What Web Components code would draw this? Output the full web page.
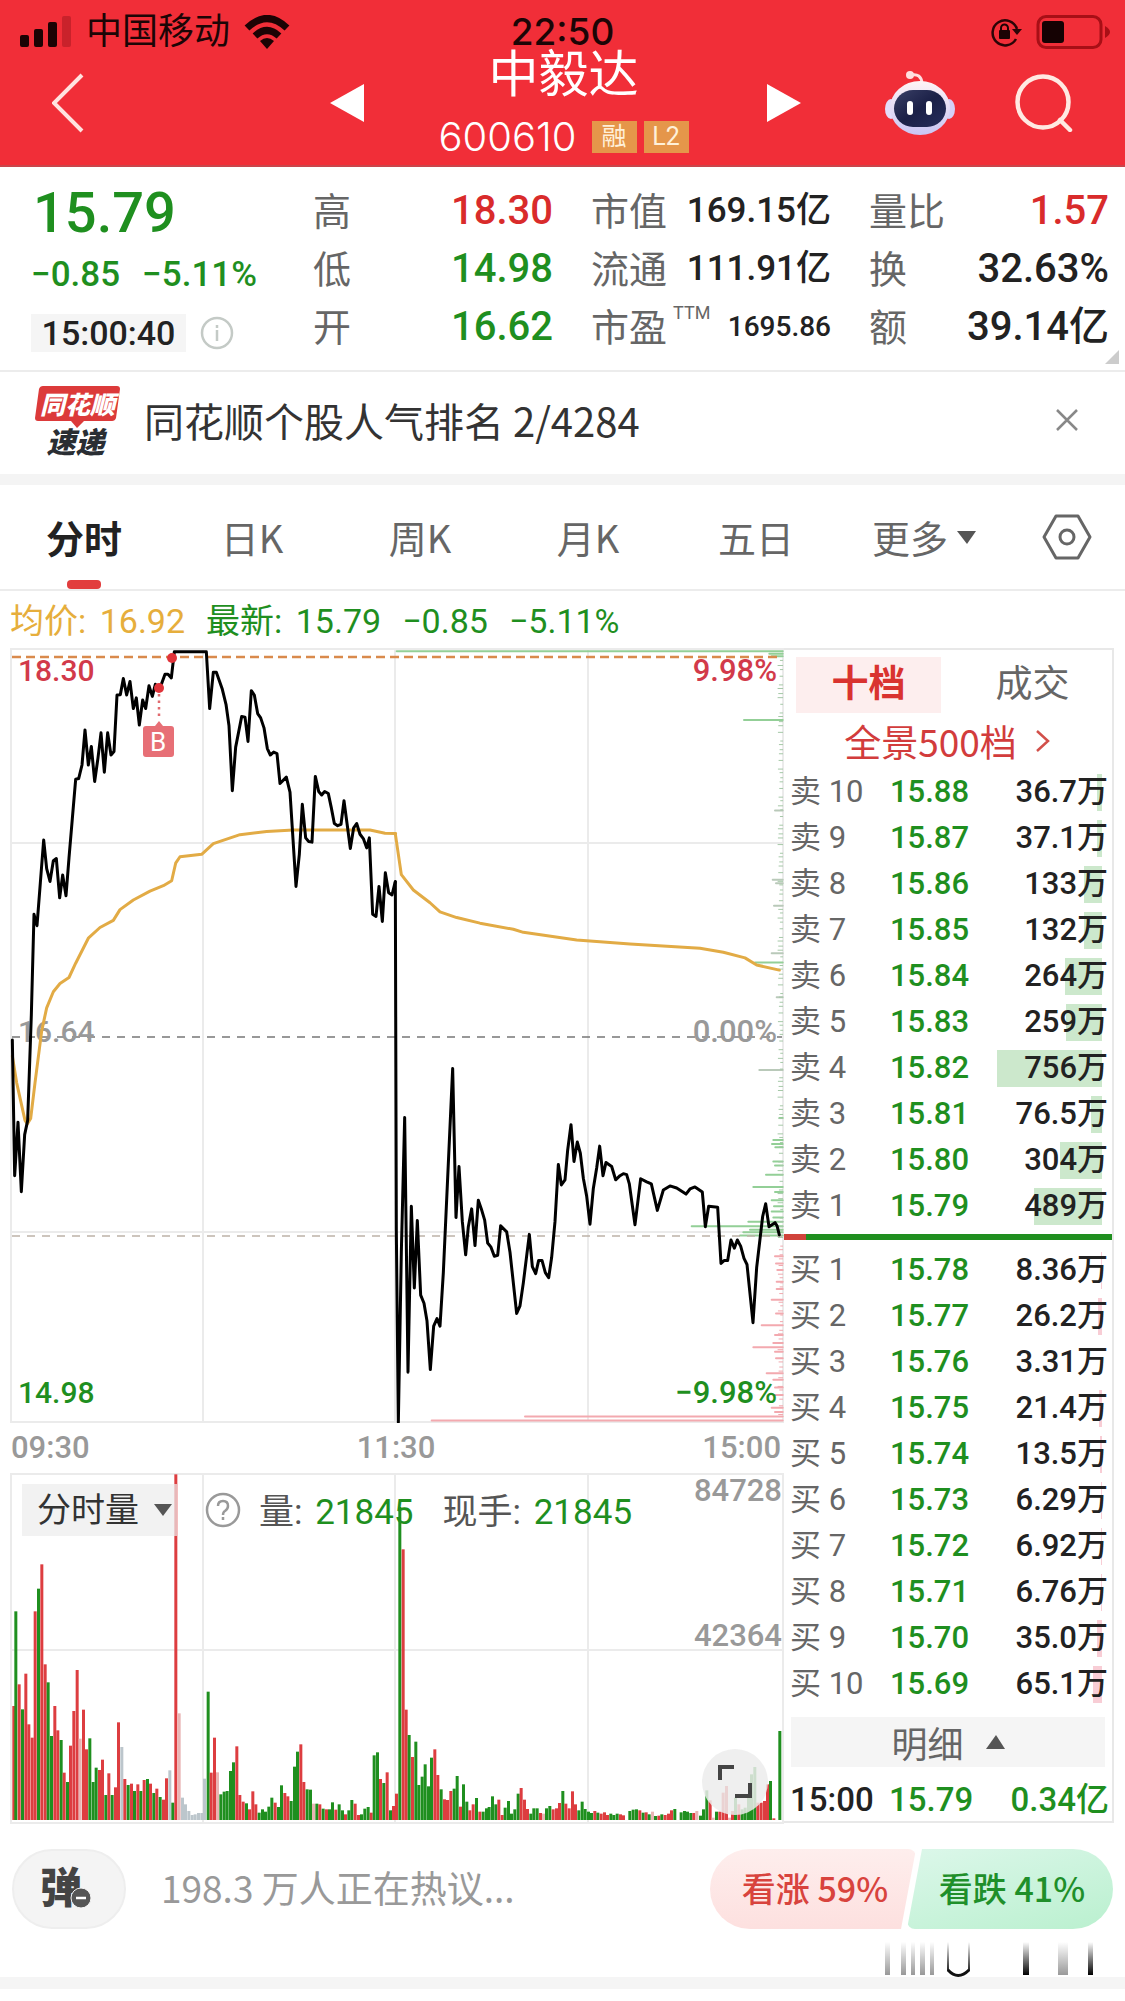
<!DOCTYPE html>
<html lang="zh-CN">
<head>
<meta charset="utf-8">
<meta name="viewport" content="width=device-width">
<title>中毅达 600610</title>
<style>
body{margin:0;background:#fff;color:#222;font-family:Roboto,"Noto Sans CJK SC",sans-serif}
</style>
</head>
<body>
<stock-page></stock-page>
<script>
const BASE=`*{box-sizing:border-box}button,select,input{font:inherit;color:inherit;background:none;border:0;padding:0;margin:0;border-radius:0}svg{display:block}.up{color:#d92b2b}.down{color:#1f8f1f}`;
function define(name,css,html,setup){
  customElements.define(name,class extends HTMLElement{
    constructor(){
      super();
      this.attachShadow({mode:'open'}).innerHTML=`<style>${BASE}${css}</style>${typeof html==='function'?html(this):html}`;
      if(setup)setup(this.shadowRoot,this);
    }
  });
}

/* ---------- phone status bar ---------- */
define('status-bar',`
:host{display:grid;grid-template-columns:1fr auto 1fr;align-items:center;height:48px;padding:14px 20px 0;color:#1c0506;font-size:36px;line-height:36px}
.l,.r{display:flex;align-items:center}.l{gap:14px}.r{justify-content:flex-end;gap:14px;margin-right:-5px}
time{font-family:Inter,sans-serif;font-weight:500;font-size:37px;line-height:34px}`,`
<div class="l">
<svg width="52" height="32" viewBox="0 0 52 32"><g fill="#1c0304"><rect y="19" width="9" height="12" rx="2"/><rect x="14" y="13" width="9" height="18" rx="2"/><rect x="28" y="6" width="9" height="25" rx="2"/></g><rect x="42" width="9" height="31" rx="2" fill="#c9222b"/></svg>
<span>中国移动</span>
<svg width="46" height="34" viewBox="0 0 46 34"><g fill="none" stroke="#1c0304" stroke-width="7"><path d="M3 13Q23-6 43 13"/><path d="M11 21Q23 10 35 21"/></g><path d="M16 26q7-6 14 0l-7 8z" fill="#1c0304"/></svg>
</div>
<time>22:50</time>
<div class="r">
<svg width="32" height="30" viewBox="0 0 32 30"><path d="M26 22A12.500 12.500 0 1 1 27 12" fill="none" stroke="#2a0507" stroke-width="2.500"/><path d="M22 12h10l-5 6z" fill="#2a0507"/><rect x="9" y="13" width="11" height="9" rx="1" fill="#1c0304"/><path d="M11 14v-3a3.500 3.500 0 0 1 7 0v3" fill="none" stroke="#1c0304" stroke-width="2"/></svg>
<svg width="74" height="34" viewBox="0 0 74 34"><rect x="2" y="1.500" width="63" height="31" rx="8" fill="none" stroke="#a80f16" stroke-width="3"/><rect x="6" y="6" width="22" height="22" rx="3" fill="#150203"/><path d="M69 11q5 3 5 6t-5 6z" fill="#a80f16"/></svg>
</div>`);

/* ---------- title bar ---------- */
define('stock-header',`
:host{display:grid;grid-template-columns:364fr 403fr 358fr;height:119px;color:#fff;border-bottom:2px solid #c9454b}
.side{display:flex;align-items:center;padding-bottom:8px}
.l{justify-content:space-between;padding-left:52px}
.r{padding-right:52px}.r button:nth-child(2){margin-left:auto;margin-right:60px}
.mid{text-align:center;padding:2px 4px 0 0}
h1{margin:0 0 17px;font-weight:400;font-size:50px;line-height:50px}
.code{display:flex;justify-content:center;align-items:center;gap:7px;font-size:40px;line-height:40px}
.code b{font-family:Inter,sans-serif;font-weight:300;margin-right:8px}
.tag{width:45px;height:32px;line-height:32px;font-size:25px;background:#e5964a;color:#fff0d8}`,`
<div class="side l">
<button aria-label="返回"><svg width="32" height="60" viewBox="0 0 32 60"><path d="M30 2L2 30l28 28" fill="none" stroke="#ffe3df" stroke-width="4"/></svg></button>
<button aria-label="上一只"><svg width="34" height="38" viewBox="0 0 34 38"><path d="M34 0v38L0 19z" fill="#fff"/></svg></button>
</div>
<div class="mid"><h1>中毅达</h1><div class="code"><b>600610</b><span class="tag">融</span><span class="tag">L2</span></div></div>
<div class="side r">
<button aria-label="下一只"><svg width="34" height="38" viewBox="0 0 34 38"><path d="M0 0v38l34-19z" fill="#fff"/></svg></button>
<button aria-label="智能助手"><svg width="70" height="64" viewBox="0 0 70 64">
<defs><linearGradient id="h" x2="0" y2="1"><stop stop-color="#fff4f6"/><stop offset="1" stop-color="#c9c5f4"/></linearGradient><linearGradient id="f" x2="1" y2="1"><stop stop-color="#3a4066"/><stop offset=".5" stop-color="#1b2047"/><stop offset="1" stop-color="#262d5c"/></linearGradient></defs>
<path d="M26 4q10-2 11 8" fill="none" stroke="#ffdfe0" stroke-width="3"/><circle cx="25" cy="4" r="4" fill="#ffdfe0"/>
<ellipse cx="6" cy="38" rx="6" ry="10" fill="#e3dcfa"/><ellipse cx="64" cy="38" rx="6" ry="10" fill="#d5d0f8"/>
<ellipse cx="35" cy="37" rx="30" ry="27" fill="url(#h)"/><rect x="9" y="19" width="52" height="37" rx="19" fill="url(#f)"/>
<rect x="22" y="30" width="6" height="14" rx="3" fill="#fff"/><rect x="41" y="30" width="6" height="14" rx="3" fill="#fff"/></svg></button>
<button aria-label="搜索"><svg width="58" height="58" viewBox="0 0 58 58"><circle cx="28" cy="28" r="25.500" fill="none" stroke="#ffe9e2" stroke-width="4.500"/><path d="M45 46l10 10" stroke="#ffe9e2" stroke-width="4.500" stroke-linecap="round"/></svg></button>
</div>`);

/* ---------- quote summary ---------- */
define('quote-panel',`
:host{display:grid;grid-template-columns:244fr 240fr 240fr 240fr;column-gap:38px;padding:15px 16px 14px 31px;height:205px;border-bottom:2px solid #ececec;position:relative}
dl{display:grid;grid-template-rows:58px 58px 58px;margin:0}
dl div{display:flex;justify-content:space-between;align-items:center}
dt{font-size:38px;line-height:44px;color:#666;white-space:nowrap;padding-top:2px}dd{margin:0;font-weight:500;font-size:40px;line-height:44px;white-space:nowrap}
dl.cap dd{font-size:35px}dl.cap div:last-child dd{font-size:28px}
sup{font-size:18px;line-height:18px;position:relative;top:-8px;margin-left:6px}
.main{display:flex;flex-direction:column;align-items:flex-start;white-space:nowrap}
.main>b{font-weight:500;font-size:56px;line-height:62px;padding-left:2px}
.chg{display:flex;gap:22px;font-size:35px;line-height:40px;font-weight:500;margin:11px 0 19px}
.t{display:flex;align-items:center;gap:14px}.t time{background:#f5f5f5;width:155px;text-align:center;font-weight:500;font-size:34px;line-height:38px}
i{position:absolute;right:6px;bottom:6px;border:solid transparent;border-width:14px 0 0 14px;border-right:0;width:0;height:0;border-bottom:14px solid #ccc;border-top:0}`,`
<div class="main"><b class="down">15.79</b><div class="chg down"><span>−0.85</span><span>−5.11%</span></div>
<div class="t"><time>15:00:40</time><svg width="34" height="34" viewBox="0 0 34 34" fill="none" stroke="#c4cac6" stroke-width="2.500"><circle cx="17" cy="17" r="15"/><path d="M17 14v11M17 9v3"/></svg></div></div>
<dl><div><dt>高</dt><dd class="up">18.30</dd></div><div><dt>低</dt><dd class="down">14.98</dd></div><div><dt>开</dt><dd class="down">16.62</dd></div></dl>
<dl class="cap"><div><dt>市值</dt><dd>169.15亿</dd></div><div><dt>流通</dt><dd>111.91亿</dd></div><div><dt>市盈<sup>TTM</sup></dt><dd>1695.86</dd></div></dl>
<dl><div><dt>量比</dt><dd class="up">1.57</dd></div><div><dt>换</dt><dd>32.63%</dd></div><div><dt>额</dt><dd>39.14亿</dd></div></dl><i></i>`);

/* ---------- news strip ---------- */
define('news-strip',`
:host{display:flex;align-items:center;height:113px;padding:0 47px 6px 35px;border-bottom:11px solid #f4f4f4}
a{flex:1;margin-left:24px;color:#333;text-decoration:none;font-family:"Noto Sans CJK SC",sans-serif;font-size:40px;line-height:48px}
.logo{width:85px;height:70px;font-weight:900;font-style:italic;text-align:center;margin-top:2px;position:relative;font-family:"Noto Sans CJK SC",sans-serif}
.logo svg{position:absolute;left:0;top:0}
.logo span{display:block;position:relative;color:#fff;font-size:25px;line-height:34px}.logo span+span{color:#2a2e33;font-size:29px;line-height:36px;margin-top:2px;margin-right:4px}`,`
<div class="logo"><svg width="85" height="42" viewBox="0 0 85 42"><path d="M8 0h74q3 0 3 3l-4 29q-1 3-4 3H49l-7 7-6-7H3q-3 0-3-3L4 3q1-3 4-3z" fill="#dc3a3a"/></svg><span>同花顺</span><span>速递</span></div>
<a href="#">同花顺个股人气排名 2/4284</a>
<button aria-label="关闭"><svg width="22" height="22" viewBox="0 0 22 22"><path d="M1 1l20 20M21 1L1 21" stroke="#888" stroke-width="2.500"/></svg></button>`);

/* ---------- period tabs ---------- */
define('period-tabs',`
:host{display:flex;height:106px;border-bottom:2px solid #ececec;font-family:"Noto Sans CJK SC",sans-serif}
button{flex:168 1 0;font-size:38px;line-height:104px;color:#666;position:relative;white-space:nowrap;display:flex;justify-content:center;align-items:center;gap:9px}
button:last-child{flex-grow:117}
.on{font-weight:700;color:#222}.on::after{content:"";position:absolute;width:34px;height:9px;border-radius:4px;background:#e23d3d;bottom:0}`,`
<button class="on">分时</button><button>日K</button><button>周K</button><button>月K</button><button>五日</button>
<button>更多<svg width="19" height="13" viewBox="0 0 19 13"><path d="M0 0h19L10 13z" fill="#555"/></svg></button>
<button aria-label="设置"><svg width="50" height="46" viewBox="0 0 50 46" fill="none" stroke="#666" stroke-width="3"><path d="M14 2h22l12 21-12 21H14L2 23z" stroke-linejoin="round"/><circle cx="25" cy="23" r="7"/></svg></button>`);

/* ---------- legend ---------- */
define('chart-legend',`
:host{display:flex;height:57px;align-items:center;padding:2px 10px 0;font-size:34px;line-height:40px;white-space:nowrap}
span{margin-right:21px}.avg{color:#e6ae3c}b{font-weight:400;margin-left:5px}`,`
<span class="avg">均价: <b>16.92</b></span><span class="down">最新: <b>15.79</b></span><span class="down">−0.85</span><span class="down">−5.11%</span>`);

/* ---------- intraday price chart ---------- */
const PRICE_AM='37,1120 44,1500 54,1350 64,1545 74,1385 83,1345 94,1050 102,768 111,800 121,680 131,560 140,640 150,676 160,618 169,612 179,722 188,658 198,716 207,610 217,500 227,390 236,388 246,350 255,252 265,350 274,298 284,396 294,330 303,260 313,370 323,260 333,322 342,312 351,154 361,153 370,108 380,154 390,116 400,192 409,162 418,238 428,168 437,192 447,128 457,158 466,124 476,132 485,122 495,96 504,96 514,106 523,33 619,33 629,192 640,90 649,90 667,138 678,180 687,240 697,422 707,300 725,214 735,216 744,284 754,142 763,154 773,206 782,218 792,246 802,304 811,322 821,314 831,318 840,402 859,384 870,426 888,690 898,600 907,460 917,554 926,564 936,566 946,382 956,424 965,434 974,424 985,430 994,470 1003,514 1013,520 1023,516 1032,450 1042,520 1051,584 1061,526 1070,514 1080,544 1090,556 1100,582 1108,554 1118,768 1128,774 1137,690 1147,788 1156,652 1166,708 1176,714 1186,676';
const PRICE_PM='46,475 49,1160 55,1533 64,1200 74,936 84,1435 94,1110 103,1270 112,1138 122,1284 132,1300 141,1335 151,1430 161,1345 171,1330 180,1345 190,1240 218,840 228,1132 237,1032 247,1140 257,1205 265,1150 275,1115 285,1187 295,1098 304,1115 314,1137 323,1182 333,1190 343,1208 353,1206 362,1148 380,1160 390,1200 410,1320 420,1305 430,1260 448,1165 457,1228 467,1242 476,1216 486,1216 496,1240 506,1250 515,1210 525,1140 535,1028 544,1068 555,1058 563,1000 573,950 582,1022 592,984 601,1006 610,1055 620,1090 630,1145 640,1075 650,1035 659,992 669,1050 678,1024 695,1032 707,1058 720,1050 730,1046 740,1048 748,1066 765,1146 782,1056 800,1062 814,1066 832,1118 850,1078 870,1070 890,1074 918,1086 930,1076 945,1072 967,1082 976,1150 986,1110 1013,1112 1023,1222 1033,1216 1043,1216 1053,1176 1063,1192 1072,1176 1082,1188 1092,1212 1101,1224 1119,1338 1130,1230 1148,1130 1157,1105 1167,1150 1185,1142 1191,1148 1198,1166';
const AVG_AM='37,1165 50,1240 75,1345 82,1355 92,1340 105,1240 125,1095 140,1030 160,985 180,962 207,945 227,905 265,835 300,805 340,785 360,755 400,728 450,703 490,688 515,674 527,625 540,607 605,600 640,570 720,545 800,536 880,532 1110,532 1155,541 1187,542';
const AVG_PM='46,380 64,460 100,490 150,515 180,533 230,544 300,555 400,567 430,573 590,588 750,596 960,604 1030,612 1095,623 1130,637 1198,647';
/* resting volume by price level: level, left end */
const DEPTH=[[22,50],[27,1168],[32,1175],[157,1092],[334,1185],[470,1178],[477,1188],[521,1182],[614,1175],[632,1125],[700,1190],[843,1138],[937,1198],[980,1180],[988,1176],[994,1186],[1022,1180],[1030,1185],[1048,1158],[1072,1120],[1082,1185],[1098,1175],[1110,1182],[1120,1175],[1132,1180],[1140,1105],[1149,935],[1156,1110],[1161,1090],[1167,1080],[1208,1185],[1222,1188],[1235,1192],[1258,1190],[1272,1190],[1293,1175],[1320,1188],[1343,1145],[1362,1185],[1378,1180],[1386,1120],[1395,1185],[1408,1188],[1437,1160],[1450,1180],[1465,1185],[1480,1180],[1505,1175],[1513,1185],[1522,435],[1530,155]];
const line=(x1,y1,x2,y2,a='')=>`<path d="M${x1} ${y1}L${x2} ${y2}" ${a}/>`;
define('price-chart',`
:host{display:block}svg{width:100%;height:auto}text{font-weight:500;font-size:30px}.e{text-anchor:end;font-size:31px}
.s{fill:none;stroke-linejoin:round;stroke-linecap:round;vector-effect:non-scaling-stroke}`,()=>{
let d='';
for(const [y,x] of DEPTH)d+=line(x,y,1208,y,`class="s" stroke-width="2" stroke="${y<1190?(y>300&&y<850&&x>1130?'#b9c9b9':'#93cf97'):'#f3a9af'}"`);
for(let y=40;y<1520;y+=7+(y*13%11))d+=line(1202-(y*7%9),y,1208,y,`class="s" stroke-width="1" stroke="${y<1180?'#a5c8a7':'#f0a8ae'}"`);
return `<svg viewBox="10 648 774 775" role="img" aria-label="分时走势">
<g fill="none" stroke="#ebebeb" stroke-width="2"><rect x="11" y="649" width="772" height="773"/>${line(203,648,203,1423)}${line(395,648,395,1423)}${line(588,648,588,1423)}${line(10,843,784,843)}${line(10,1232,784,1232)}</g>
<g transform="translate(380 640) scale(.33333 .5102)">${d}</g>
${line(12,657,782,657,'stroke="#d98a4c" stroke-width="2.500" stroke-dasharray="9 5"')}
${line(12,1037,782,1037,'stroke="#777" stroke-width="1.500" stroke-dasharray="8 7"')}
${line(12,1236,782,1236,'stroke="#bdb3a8" stroke-width="1.500" stroke-dasharray="8 7"')}
<g fill="#999"><text x="18" y="1042">16.64</text><text class="e" x="777" y="1042">0.00%</text></g>
<g transform="translate(0 640) scale(.33333 .35714)"><polyline class="s" points="${AVG_AM}" stroke="#e2ab45" stroke-width="3"/><polyline class="s" points="${PRICE_AM}" stroke="#000" stroke-width="3"/></g>
<g transform="translate(380 640) scale(.33333 .5102)"><polyline class="s" points="${AVG_PM}" stroke="#e2ab45" stroke-width="3"/><polyline class="s" points="${PRICE_PM}" stroke="#000" stroke-width="3"/></g>
<circle cx="172" cy="658" r="5" fill="#e0333a"/><circle cx="159" cy="688" r="5" fill="#e0333a"/>
${line(159,694,159,718,'stroke="#e06a6e" stroke-width="2.500" stroke-dasharray="2.500 4"')}
<path d="M146 726h9l4-5 4 5h8q3 0 3 3v25q0 3-3 3h-25q-3 0-3-3v-25q0-3 3-3z" fill="#e76f76"/><text x="158" y="751" text-anchor="middle" fill="#fff" style="font-size:26px;font-weight:400">B</text>
<g fill="#d23a4a"><text x="18" y="681">18.30</text><text class="e" x="777" y="681">9.98%</text></g>
<g fill="#1f8f1f"><text x="18" y="1403">14.98</text><text class="e" x="777" y="1403">−9.98%</text></g></svg>`;});

define('time-axis',`:host{display:flex;justify-content:space-between;height:50px;line-height:50px;font-size:31px;font-weight:500;color:#999;padding:0 3px 0 1px}`,`<span>09:30</span><span>11:30</span><span>15:00</span>`);

/* ---------- volume chart: x, top, colour (r rise, g fall, n flat, p pale rise) ---------- */
const VOL_AM='42 855r,48 571g,58 790r,68 865g,78 758r,87 910r,97 950r,106 571r,116 503g,126 430r,136 730r,145 784g,155 945g,165 855r,174 928r,184 957g,193 1055r,203 1083g,212 974r,222 870r,232 747r,241 953p,251 866r,260 985r,270 952g,280 1083g,289 1040g,299 1047r,308 1016r,318 1122g,327 1057r,337 1122g,347 1099r,356 904r,366 978n,375 1074r,385 1092g,395 1088r,404 1110g,414 1090r,423 1110g,433 1077r,443 1074g,452 1088r,462 1116g,471 1103r,481 1128g,491 1136r,500 1072r,510 1048n,519 1145g,528 160r,538 877p,548 1130n,557 1150n,567 1170n,577 1182n,586 1180n,596 1176n,606 1176n,614 1073n,625 812g,634 1055r,644 950r,653 1054p,663 1120g,673 1112g,682 1110g,692 1050g,701 1024g,711 976r,720 1122r,730 1142r,740 1147g,749 1165r,759 1111r,768 1150r,778 1175g,788 1165g,797 1172g,807 1157g,816 1130g,826 1145r,836 1158g,845 1093g,855 1116r,864 1126r,874 1140g,884 1037g,893 992g,903 970r,912 1083r,922 1105g,932 1106g,941 1148p,951 1148g,960 1150r,970 1163g,980 1165r,989 1165g,998 1144g,1008 1166r,1018 1150g,1028 1168g,1037 1180r,1047 1168g,1056 1137g,1066 1148r,1076 1182r,1085 1180g,1095 1163g,1105 1158g,1114 1175r,1123 1003g,1133 994g,1142 1074r,1152 1086g,1162 1054r,1172 1168g,1181 1155r';
const VOL_PM='20 1118r,30 258g,40 385r,49 866r,58 942g,68 1008r,78 962g,87 1092g,97 1067g,106 1030g,116 1096g,125 1010g,135 985r,144 1062r,154 1105g,164 1135r,173 1137r,183 1110r,193 1103g,202 1065g,212 1157r,221 1090g,231 1142g,240 1168r,250 1150r,260 1131g,270 1172r,280 1172g,290 1162g,298 1158g,308 1126g,318 1150g,327 1136r,337 1182r,346 1160g,356 1140g,365 1178g,375 1165g,385 1118g,394 1101r,404 1136r,413 1164r,423 1178g,432 1162g,442 1162g,452 1176r,461 1178p,470 1162g,480 1155g,490 1165r,500 1162r,509 1146r,519 1110g,528 1148r,538 1162r,548 1111r,557 1150r,567 1168g,577 1142g,586 1164g,596 1172g,605 1176g,615 1170r,624 1175g,634 1178r,644 1174r,653 1182r,663 1178g,672 1182g,682 1178g,692 1180r,701 1183r,720 1170g,730 1166g,740 1165g,750 1168r,760 1175g,769 1174r,778 1180g,788 1172p,797 1185g,807 1184r,816 1180g,826 1182r,836 1178r,845 1168r,855 1164g,874 1174g,884 1170g,893 1172g,903 1176g,912 1176r,921 1170p,932 1184g,941 1165g,951 1108g,961 1138r,970 1190p,980 1172g,990 1172r,1000 1115r,1010 1095r,1019 1190p,1028 1170r,1037 1130g,1047 1150r,1057 1165g,1066 1160g,1076 1130g,1085 1060g,1095 1038g,1104 1145r,1114 1145r,1124 1140r,1133 1090r,1142 1080g,1152 1192r,1170 930g';
const VC={r:'#dd3d40',g:'#1f8f1f',n:'#bcc6cc',p:'#e9b5b5'};
const bars=(s,o)=>s.split(',').map(b=>{const [x,t]=b.split(' '),y=parseInt(t);return `<rect x="${+x+o-5}" y="${y}" width="9" height="${1197-y}" fill="${VC[t.slice(-1)]}"/>`}).join('');
define('volume-chart',`
:host{display:grid}:host>*{grid-area:1/1}svg.c{width:100%;height:auto}text{font-weight:500;font-size:31px;fill:#999;text-anchor:end}
.bar{display:flex;align-items:center;align-self:start;margin:11px 0 0 12px;height:52px;font-size:35px;color:#555;white-space:nowrap}
label{display:flex;align-items:center;position:relative;background:rgba(236,236,236,.7);height:52px;width:155px}
select{appearance:none;width:155px;height:52px;padding-left:15px;color:#333;outline:0;font-size:34px}
label svg{position:absolute;right:5px;top:20px}
.bar>svg{margin:0 18px 0 28px}.bar span{padding-bottom:4px}b{font-weight:400;margin-left:4px;margin-right:29px}
.full{align-self:end;justify-self:end;width:66px;height:66px;border-radius:50%;background:rgba(236,236,236,.85);margin:0 16px 9px;display:grid;place-items:center}`,`
<svg class="c" viewBox="10 1472 774 351" role="img" aria-label="分时成交量">
<g fill="none" stroke="#ebebeb" stroke-width="2"><rect x="11" y="1473" width="772" height="349"/>${line(203,1472,203,1823)}${line(395,1472,395,1823)}${line(588,1472,588,1823)}${line(10,1649,784,1649)}</g>
<text x="782" y="1500">84728</text><text x="782" y="1645">42364</text>
<g transform="translate(0 1420) scale(.33333)">${bars(VOL_AM,0)}${bars(VOL_PM,1170)}</g></svg>
<div class="bar"><label><select aria-label="指标"><option>分时量</option></select><svg width="18" height="12" viewBox="0 0 18 12"><path d="M0 0h18L9 12z" fill="#555"/></svg></label>
<svg width="36" height="36" viewBox="0 0 36 36" fill="none" stroke="#999" stroke-width="2.500"><circle cx="18" cy="18" r="16"/><path d="M13 14q0-5 5-5t5 5q0 3-3 5-2 1-2 4M18 25v3"/></svg>
<span>量: <b class="down">21845</b></span><span>现手: <b class="down">21845</b></span></div>
<button class="full" aria-label="全屏"><svg width="36" height="36" viewBox="0 0 36 36" fill="none" stroke="#444" stroke-width="4"><path d="M3 16V3h14M33 19v13H18"/></svg></button>`);

/* ---------- order book ---------- */
const SELL=[['10','15.88','36.7'],['9','15.87','37.1'],['8','15.86','133'],['7','15.85','132'],['6','15.84','264'],['5','15.83','259'],['4','15.82','756'],['3','15.81','76.5'],['2','15.80','304'],['1','15.79','489']];
const BUY=[['1','15.78','8.36'],['2','15.77','26.2'],['3','15.76','3.31'],['4','15.75','21.4'],['5','15.74','13.5'],['6','15.73','6.29'],['7','15.72','6.92'],['8','15.71','6.76'],['9','15.70','35.0'],['10','15.69','65.1']];
const rows=(a,n,c)=>`<table class="${c}">${a.map(r=>`<tr><th scope="row">${n} ${r[0]}</th><td class="down">${r[1]}</td><td style="--w:${Math.round(r[2]*.139)}px">${r[2]}万</td></tr>`).join('')}</table>`;
define('order-book',`
:host{display:block;border:solid #e8e8e8;border-width:2px 2px 2px 0;font-size:31px}
nav{display:flex;justify-content:space-between;padding:7px 0 0 12px}nav button{width:145px;height:56px;font-size:37px;line-height:56px;color:#666}
nav button+button{margin-right:7px}
nav .on{background:#fdeeee;color:#d9332f;font-weight:700}
a{display:flex;align-items:center;justify-content:center;gap:18px;padding-right:2px;height:56px;color:#d23c3c;font-size:37px;text-decoration:none;font-family:"Noto Sans CJK SC",sans-serif}
table{border-collapse:collapse;width:100%;table-layout:fixed}tr{height:46px}th,td{padding:0;line-height:44px;height:46px;text-align:left;font-weight:500;white-space:nowrap}
th{width:106px;padding-left:6px;font-weight:400;color:#666}
td:nth-child(2){width:94px}td:nth-child(3){text-align:right;padding-right:4px;background:linear-gradient(var(--c),var(--c)) right 10px center/var(--w) 37px no-repeat}
.s{--c:#cce8cc}.b{--c:#f8cdd5}
.ratio{height:6px;margin:5px 0 7px;background:linear-gradient(90deg,#d0433b 22px,#1f8f1f 0)}
.more{display:flex;align-items:center;justify-content:center;gap:22px;width:calc(100% - 14px);height:50px;margin:10px 7px 12px;background:#f5f5f5;color:#666;font-size:36px}
.last{display:grid;grid-template-columns:99px auto 1fr;padding:0 3px 0 6px;font-size:33px;line-height:42px;font-weight:500}.last span:last-child{text-align:right}`,`
<nav><button class="on">十档</button><button>成交</button></nav>
<a href="#">全景500档<svg width="15" height="24" viewBox="0 0 15 24"><path d="M2 2l11 10L2 22" fill="none" stroke="#d2504a" stroke-width="2.500"/></svg></a>
${rows(SELL,'卖','s')}<div class="ratio"></div>${rows(BUY,'买','b')}
<button class="more">明细<svg width="19" height="14" viewBox="0 0 19 14"><path d="M0 14h19L10 0z" fill="#555"/></svg></button>
<div class="last"><span>15:00</span><span class="down">15.79</span><span class="down">0.34亿</span></div>`);

/* ---------- discussion bar ---------- */
define('discussion-bar',`
:host{display:block;border-bottom:12px solid #f5f5f5;font-family:"Noto Sans CJK SC",sans-serif}
.row{display:flex;align-items:center;padding:25px 12px 0 12px}
.dan{flex:none;width:114px;height:80px;border-radius:40px;background:#f4f4f4;border:2px solid #eee;color:#444;font-weight:900;font-size:42px;line-height:66px;padding:0 16px 8px 0;position:relative}
.dan svg{position:absolute;right:32px;bottom:18px}
input{flex:1;min-width:0;margin-left:35px;font-size:37px;line-height:44px;height:60px;padding-bottom:4px;outline:0}input::placeholder{color:#999;opacity:1}
.v{width:206px;height:80px;font-size:34px;font-weight:500;padding:0 0 4px 4px;white-space:nowrap}
.u{color:#d8433d;border-radius:40px 8px 8px 40px;background:linear-gradient(#feeeed,#fde0df);clip-path:polygon(0 0,100% 0,calc(100% - 15px) 100%,0 100%)}
.d{color:#1f8f2a;border-radius:8px 40px 40px 8px;margin-left:-9px;background:linear-gradient(165deg,#dcf7ea,#baf0cf);clip-path:polygon(15px 0,100% 0,100% 100%,0 100%)}
.w{margin:13px 28px 0 auto}`,`
<div class="row"><button class="dan" aria-label="弹幕">弹<svg width="22" height="22" viewBox="0 0 22 22"><circle cx="11" cy="11" r="10" fill="#555" stroke="#f4f4f4" stroke-width="1"/><path d="M6 11h10" stroke="#fff" stroke-width="2.500"/></svg></button>
<input aria-label="讨论" placeholder="198.3 万人正在热议...">
<button class="v u">看涨 59%</button><button class="v d">看跌 41%</button></div>
<svg class="w" width="212" height="35" viewBox="0 0 212 35"><defs><linearGradient id="k" x2="0" y2="33" gradientUnits="userSpaceOnUse"><stop stop-color="#000" stop-opacity="0"/><stop offset="1"/></linearGradient></defs>
<g fill="url(#k)"><g opacity=".4"><rect width="5" height="33"/><rect x="16" width="5" height="33"/><rect x="26" width="4" height="33"/><rect x="35" width="5" height="33"/><rect x="45" width="4" height="33"/><rect x="173" width="10" height="33"/></g><rect x="62" width="2" height="29"/><rect x="83" width="2" height="29"/><rect x="138" width="6" height="33"/><rect x="203" width="5" height="33"/></g><path d="M63 28q10 11 21 0" fill="none" stroke="#111" stroke-width="3"/></svg>`);

define('stock-page',`
:host{display:block}
.top{background:#f12e38}
.trade{display:grid;grid-template-columns:minmax(0,1fr) 330px;padding:0 11px 0 10px;align-items:start}`,`
<header class="top"><status-bar></status-bar><stock-header></stock-header></header>
<main><quote-panel></quote-panel><news-strip></news-strip><period-tabs></period-tabs><chart-legend></chart-legend>
<section class="trade"><div><price-chart></price-chart><time-axis></time-axis><volume-chart></volume-chart></div><order-book></order-book></section></main>
<discussion-bar></discussion-bar>`);
</script>
</body>
</html>
